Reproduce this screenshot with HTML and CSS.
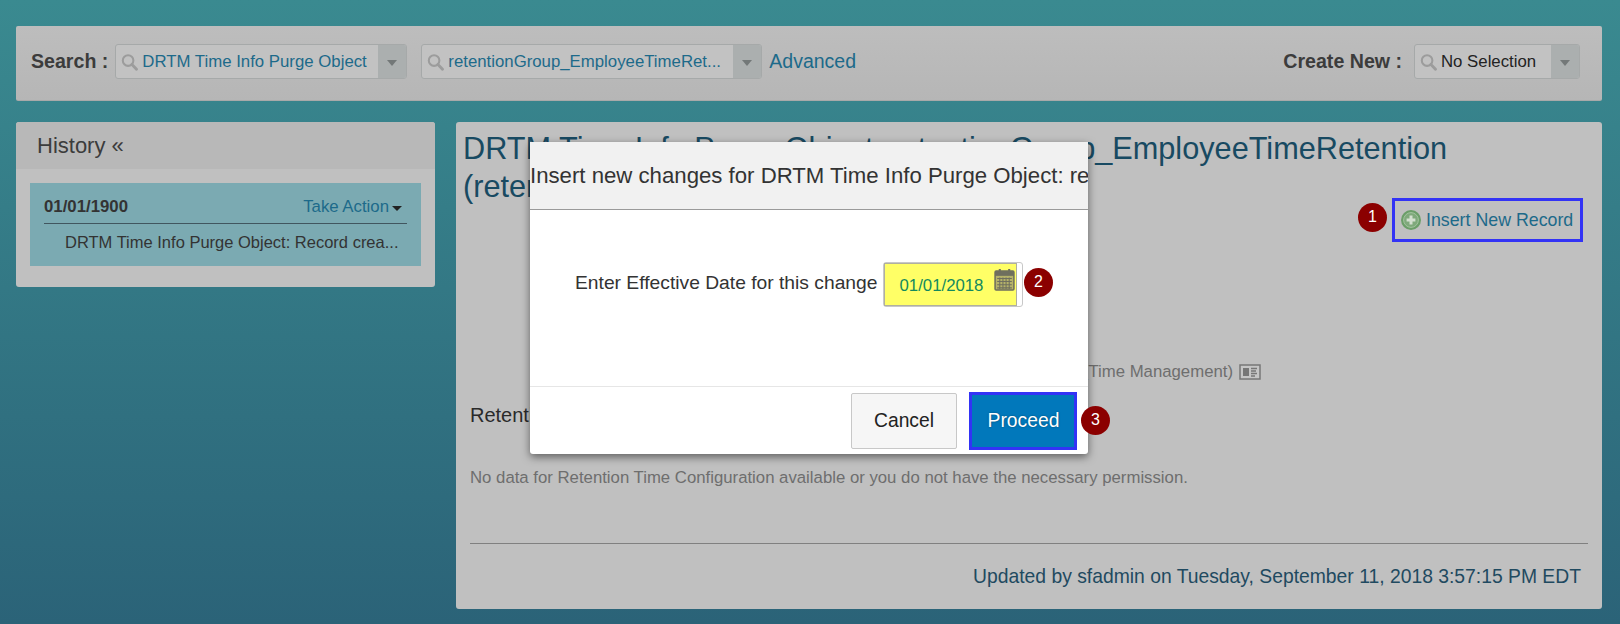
FILE: index.html
```html
<!DOCTYPE html>
<html lang="en">
<head>
<meta charset="utf-8">
<title>DRTM Time Info Purge Object</title>
<link rel="stylesheet" href="styles.css">
</head>
<body>
<svg class="defs" width="0" height="0" aria-hidden="true">
  <symbol id="mag" viewBox="0 0 18 18">
    <circle cx="7.5" cy="7.5" r="5.6" fill="none" stroke="#9c9c9c" stroke-width="2.2"/>
    <path d="M11.6 11.6 16.4 16.6" stroke="#9c9c9c" stroke-width="3" stroke-linecap="round"/>
  </symbol>
</svg>
<header class="topbar">
  <span class="label">Search :</span>
  <div class="combo combo-a">
    <svg class="mag"><use href="#mag"/></svg>
    <span class="combo-text link">DRTM Time Info Purge Object</span>
    <span class="combo-arrow"><i></i></span>
  </div>
  <div class="combo combo-b">
    <svg class="mag"><use href="#mag"/></svg>
    <span class="combo-text link">retentionGroup_EmployeeTimeRet...</span>
    <span class="combo-arrow"><i></i></span>
  </div>
  <a class="advanced link">Advanced</a>
  <span class="label create">Create New :</span>
  <div class="combo combo-c">
    <svg class="mag"><use href="#mag"/></svg>
    <span class="combo-text dark">No Selection</span>
    <span class="combo-arrow"><i></i></span>
  </div>
</header>

<div class="columns">
  <aside class="history">
    <div class="history-head">History «</div>
    <div class="history-body">
      <div class="card">
        <div class="card-top">
          <b>01/01/1900</b>
          <span class="take link">Take Action<i></i></span>
        </div>
        <div class="card-desc">DRTM Time Info Purge Object: Record crea...</div>
      </div>
    </div>
  </aside>

  <main class="detail">
    <h1 class="title">DRTM Time Info Purge Object: retentionGroup_EmployeeTimeRetention (retentionGroup_EmployeeTimeRetention)</h1>
    <div class="actions">
      <a class="insert link">
        <svg class="plus" viewBox="0 0 20 20" aria-hidden="true">
          <circle cx="10" cy="10" r="10" fill="#6b9e68"/>
          <circle cx="10" cy="10" r="7.4" fill="#7fa97b" stroke="#a3c49f"/>
          <path d="M10 5.600v8.800M5.600 10h8.800" stroke="#d3dfcf" stroke-width="3"/>
        </svg>
        Insert New Record
      </a>
    </div>
    <div class="meta">
      <span>Retention Group (Time Management)</span>
      <svg class="card-icon" viewBox="0 0 22 16" aria-hidden="true">
        <rect x="1" y="1" width="20" height="14" fill="#c6c6c6" stroke="#777" stroke-width="1.500"/>
        <rect x="4" y="4" width="6" height="8" fill="#777"/>
        <path d="M12 4.500h6M12 7h5M12 9.500h6M12 12h4" stroke="#777" stroke-width="1.300"/>
      </svg>
    </div>
    <h2 class="section">Retention Time Configuration</h2>
    <p class="nodata">No data for Retention Time Configuration available or you do not have the necessary permission.</p>
    <hr class="rule">
    <p class="updated">Updated by sfadmin on Tuesday, September 11, 2018 3:57:15 PM EDT</p>
  </main>
</div>

<span class="badge b1">1</span>

<section class="dialog">
  <div class="dialog-head">Insert new changes for DRTM Time Info Purge Object: retentionGroup_EmployeeTimeRetention</div>
  <div class="dialog-body">
    <span class="date-label">Enter Effective Date for this change</span>
    <div class="date-field">
      <span class="date-input">01/01/2018
        <svg class="cal" viewBox="0 0 20 22" aria-hidden="true">
          <rect x="1" y="3" width="18" height="18" rx="1" fill="#b5b26a" stroke="#6f6f5e" stroke-width="1.500"/>
          <rect x="1" y="3" width="18" height="4.500" fill="#6f6f5e"/>
          <path d="M5.500 1v4M14.500 1v4" stroke="#6f6f5e" stroke-width="2"/>
          <path d="M3 10h14M3 13h14M3 16h14M3 19h14M5.500 9v11M8.500 9v11M11.500 9v11M14.500 9v11" stroke="#6f6f5e" stroke-width="1"/>
        </svg>
      </span>
    </div>
    <span class="badge b2">2</span>
  </div>
  <div class="dialog-foot">
    <button class="btn cancel">Cancel</button>
    <button class="btn proceed">Proceed</button>
    <span class="badge b3">3</span>
  </div>
</section>
</body>
</html>
```
FILE: styles.css
```css
* { box-sizing: border-box; }
html, body { height: 100%; }
body {
  margin: 0;
  height: 624px;
  overflow: hidden;
  padding: 26px 18px 0 16px;
  position: relative;
  font-family: "Liberation Sans", Arial, sans-serif;
  background: linear-gradient(#3a8a90, #2b6378);
  color: #333;
}
.defs { position: absolute; }
.link { color: #1d6a8a; }

.topbar {
  height: 75px;
  display: flex;
  align-items: flex-start;
  padding: 18px 22px 0 15px;
  background: linear-gradient(#bdbdbd, #b6b6b6);
  border-bottom: 1px solid #a9a9a9;
  border-radius: 2px;
}
.label { font-weight: bold; font-size: 19.600px; line-height: 34px; color: #3c3c3c; white-space: nowrap; }
.combo {
  height: 35px;
  display: flex;
  align-items: center;
  border: 1px solid #a6a9a9;
  border-radius: 3px;
  background: #c2c2c2;
  overflow: hidden;
}
.combo-a { width: 292px; margin-left: 7px; }
.combo-b { width: 341px; margin-left: 14px; }
.combo-c { width: 166px; margin-left: 12px; }
.mag { width: 17px; height: 18px; margin-left: 5px; flex: none; }
.combo-text { flex: 1; margin-left: 4px; padding-top: 1px; font-size: 16.800px; white-space: nowrap; overflow: hidden; }
.dark { color: #222; }
.combo-arrow {
  width: 28px;
  height: 100%;
  flex: none;
  background: #abafaf;
  display: flex;
  align-items: center;
  justify-content: center;
}
.combo-arrow i {
  width: 0;
  height: 0;
  margin-top: 3px;
  border: 5px solid transparent;
  border-top: 6px solid #737878;
  border-bottom: 0;
}
.advanced { margin-left: 7px; font-size: 19.500px; line-height: 34px; }
.create { margin-left: auto; }

.columns { display: flex; gap: 21px; margin-top: 21px; align-items: flex-start; }

.history {
  width: 419px;
  height: 165px;
  flex: none;
  background: #c0c0c0;
  border-radius: 3px;
  overflow: hidden;
}
.history-head {
  height: 47px;
  padding-left: 21px;
  background: #b8b8b8;
  font-size: 22px;
  line-height: 47px;
  color: #3c3c3c;
}
.history-body { padding: 14px 14px 0; }
.card { height: 83px; background: #7baab2; padding: 0 14px; }
.card-top {
  height: 41px;
  display: flex;
  justify-content: space-between;
  align-items: center;
  border-bottom: 1px solid #41565f;
  padding-top: 8px;
  font-size: 16.800px;
  color: #333;
}
.take { display: flex; align-items: center; }
.take i {
  width: 0;
  height: 0;
  margin: 3px 5px 0 3px;
  border: 5px solid transparent;
  border-top: 5px solid #222;
  border-bottom: 0;
}
.card-desc {
  padding: 9px 0 0 21px;
  font-size: 16.500px;
  white-space: nowrap;
  color: #333;
}

.detail {
  flex: 1;
  height: 487px;
  background: #c0c0c0;
  border-radius: 3px;
  padding: 8px 14px 0 14px;
}
.title {
  margin: 0 0 0 -7px;
  width: 1040px;
  font-size: 30.700px;
  font-weight: normal;
  line-height: 38px;
  color: #184a62;
}
.actions { display: flex; justify-content: flex-end; height: 44px; margin-top: -8px; padding-right: 5px; }
.insert {
  width: 191px;
  height: 44px;
  border: 3px solid #3333f5;
  display: flex;
  align-items: center;
  padding-left: 6px;
  gap: 5px;
  font-size: 17.800px;
  white-space: nowrap;
}
.plus { width: 20px; height: 20px; flex: none; }
.meta {
  display: flex;
  justify-content: flex-end;
  align-items: center;
  gap: 6px;
  margin-top: 120px;
  padding-right: 327px;
  height: 20px;
  font-size: 16.750px;
  color: #6e6e6e;
}
.card-icon { width: 22px; height: 16px; }
.section { margin: 21px 0 0; font-size: 20px; font-weight: normal; line-height: 24px; color: #2a2a2a; }
.nodata { margin: 42px 0 0; font-size: 16.750px; line-height: 18px; color: #6e6e6e; }
.rule { margin: 56px 0 0; border: 0; border-top: 1px solid #808080; }
.updated { margin: 22px 7px 0 0; text-align: right; font-size: 19.320px; line-height: 22px; color: #1f4a60; }

.dialog {
  position: absolute;
  left: 530px;
  top: 142px;
  width: 558px;
  height: 312px;
  background: #fff;
  display: flex;
  flex-direction: column;
  border-radius: 0 0 3px 3px;
  box-shadow: 0 3px 9px rgba(0,0,0,.5);
}
.dialog-head {
  height: 68px;
  flex: none;
  background: #f1f1f1;
  border-bottom: 1px solid #9a9a9a;
  font-size: 22.200px;
  line-height: 67px;
  color: #333;
  white-space: nowrap;
  overflow: hidden;
}
.dialog-body {
  flex: 1;
  position: relative;
  display: flex;
  align-items: flex-start;
  padding: 52px 0 0 45px;
}
.date-label { font-size: 19.250px; line-height: 42px; color: #333; margin-right: 6px; }
.date-field {
  width: 140px;
  height: 45px;
  border: 1px solid #c8c8c8;
  border-radius: 3px;
  background: #fff;
}
.date-input {
  display: block;
  width: 133px;
  height: 43px;
  padding: 12px 0 0 14px;
  background: #ffff66;
  border: 1px solid #b0b0a0;
  font-size: 16.800px;
  line-height: 20px;
  color: #138a5e;
  position: relative;
}
.cal { position: absolute; right: 1px; top: 4px; width: 21px; height: 23px; }
.dialog-foot {
  height: 68px;
  flex: none;
  border-top: 1px solid #e6e6e6;
  display: flex;
  justify-content: flex-end;
  align-items: center;
  gap: 12px;
  padding-right: 11px;
  position: relative;
}
.btn { font-family: inherit; font-size: 19.300px; border-radius: 2px; }
.cancel { width: 106px; height: 56px; background: #f6f6f6; border: 1px solid #c8c8c8; color: #222; }
.proceed { width: 108px; height: 58px; padding: 1px 0 0 1px; background: #0178bb; border: 3px solid #3333f5; color: #fff; border-radius: 0; text-shadow: 0 0 2px rgba(0,0,0,.4); }

.badge {
  position: absolute;
  width: 29px;
  height: 29px;
  border-radius: 50%;
  background: #8b0000;
  color: #fff;
  font-size: 16px;
  line-height: 27px;
  text-align: center;
}
.b1 { left: 1358px; top: 203px; }
.b2 { left: 494px; top: 58px; }
.b3 { left: 551px; top: 19px; }
```
